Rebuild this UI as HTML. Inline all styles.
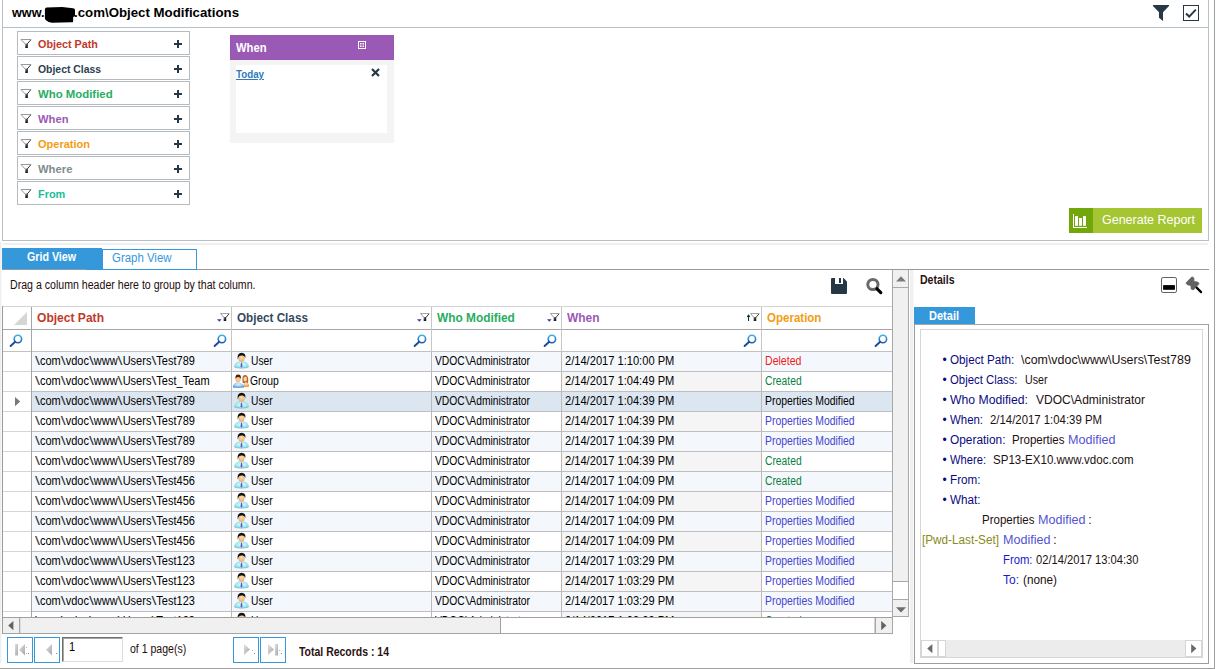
<!DOCTYPE html>
<html><head><meta charset="utf-8"><title>Object Modifications</title>
<style>
html,body{margin:0;padding:0;background:#fff}
body{width:1217px;height:669px;position:relative;overflow:hidden;font-family:"Liberation Sans",sans-serif}
.r{position:absolute;box-sizing:content-box;display:block}
.t{position:absolute;white-space:pre;transform-origin:0 0;display:block}
.bs{display:inline-block;font-style:normal;width:5.4px;transform:scaleX(1.62);transform-origin:0 0;opacity:.78}
</style></head>
<body>
<div class="r" style="left:2px;top:0px;width:1px;height:241px;background:#b9c1c8;"></div>
<div class="r" style="left:1208px;top:0px;width:1px;height:241px;background:#b9c1c8;"></div>
<div class="r" style="left:2px;top:27px;width:1207px;height:1px;background:#b9c1c8;"></div>
<div class="r" style="left:2px;top:240px;width:1207px;height:1px;background:#b9c1c8;"></div>
<div class="r" style="left:3px;top:243px;width:1205px;height:2px;background:#efefef;"></div>
<div class="r" style="left:1214px;top:0px;width:1px;height:669px;background:#a0a0a0;"></div>
<div class="r" style="left:0px;top:668px;width:1215px;height:1px;background:#a0a0a0;"></div>
<svg width="0" height="0" style="position:absolute"><defs><linearGradient id="fs" x1="0" y1="0" x2="1" y2="1"><stop offset="0" stop-color="#9a9a9a"/><stop offset="0.6" stop-color="#222"/><stop offset="1" stop-color="#000"/></linearGradient></defs></svg>
<span class="t" style="left:11.90px;top:4px;font-size:13px;line-height:17px;color:#000;font-weight:bold;transform:scaleX(0.9742);">www.</span>
<svg class="r" style="left:44px;top:5px" width="34" height="20" viewBox="0 0 34 20"><path d="M0.9 4.4 Q1 2.6 2.6 2.4 L18.2 1.9 L29 3.2 Q31 3.4 31 5 L31 11 Q30.8 11.8 29.2 11.9 L29.1 16.4 Q29 17.3 28 17.3 L8 17.8 Q4.5 17.6 1.6 15 Q0.9 14.2 0.9 13 Z" fill="#000"/></svg>
<span class="t" style="left:73.80px;top:4px;font-size:13px;line-height:17px;color:#000;font-weight:bold;transform:scaleX(1.0198);">.com\Object Modifications</span>
<svg class="r" style="left:1153px;top:5px" width="16" height="16" viewBox="0 0 16 16"><path d="M0 0 H16 V1 L10 7.2 V16 L6 12.8 V7.2 L0 1 Z" fill="#263845"/></svg>
<svg class="r" style="left:1183px;top:5px" width="16" height="16" viewBox="0 0 16 16"><rect x="0.5" y="0.5" width="15" height="15" fill="#fff" stroke="#263845" stroke-width="1"/><path d="M3 8.6 L6.2 11.6 L12.8 4.6" fill="none" stroke="#263845" stroke-width="2"/></svg>
<div class="r" style="left:17px;top:31px;width:171px;height:22px;border:1px solid #b4bcc2;background:#fff"></div>
<svg class="r" style="left:20px;top:38px" width="12" height="11" viewBox="0 0 12 11"><path d="M0.8 1.5 H11" stroke="#9a9a9a" stroke-width="1"/><path d="M1.2 1.8 L5.6 6.4" stroke="#8a8a8a" stroke-width="0.9"/><path d="M10.8 1.8 L7.2 6" stroke="#3a3a3a" stroke-width="1"/><rect x="5.2" y="5.6" width="2.6" height="4.4" fill="url(#fs)"/></svg>
<span class="t" style="left:38.00px;top:37px;font-size:11px;line-height:15px;color:#c0392b;font-weight:bold;transform:scaleX(0.9800);">Object Path</span>
<div class="r" style="left:174px;top:43px;width:8px;height:2px;background:#263845;"></div>
<div class="r" style="left:177px;top:40px;width:2px;height:8px;background:#263845;"></div>
<div class="r" style="left:17px;top:56px;width:171px;height:22px;border:1px solid #b4bcc2;background:#fff"></div>
<svg class="r" style="left:20px;top:63px" width="12" height="11" viewBox="0 0 12 11"><path d="M0.8 1.5 H11" stroke="#9a9a9a" stroke-width="1"/><path d="M1.2 1.8 L5.6 6.4" stroke="#8a8a8a" stroke-width="0.9"/><path d="M10.8 1.8 L7.2 6" stroke="#3a3a3a" stroke-width="1"/><rect x="5.2" y="5.6" width="2.6" height="4.4" fill="url(#fs)"/></svg>
<span class="t" style="left:38.00px;top:62px;font-size:11px;line-height:15px;color:#2c3e50;font-weight:bold;transform:scaleX(0.9469);">Object Class</span>
<div class="r" style="left:174px;top:68px;width:8px;height:2px;background:#263845;"></div>
<div class="r" style="left:177px;top:65px;width:2px;height:8px;background:#263845;"></div>
<div class="r" style="left:17px;top:81px;width:171px;height:22px;border:1px solid #b4bcc2;background:#fff"></div>
<svg class="r" style="left:20px;top:88px" width="12" height="11" viewBox="0 0 12 11"><path d="M0.8 1.5 H11" stroke="#9a9a9a" stroke-width="1"/><path d="M1.2 1.8 L5.6 6.4" stroke="#8a8a8a" stroke-width="0.9"/><path d="M10.8 1.8 L7.2 6" stroke="#3a3a3a" stroke-width="1"/><rect x="5.2" y="5.6" width="2.6" height="4.4" fill="url(#fs)"/></svg>
<span class="t" style="left:38.00px;top:87px;font-size:11px;line-height:15px;color:#27ae60;font-weight:bold;transform:scaleX(1.0348);">Who Modified</span>
<div class="r" style="left:174px;top:93px;width:8px;height:2px;background:#263845;"></div>
<div class="r" style="left:177px;top:90px;width:2px;height:8px;background:#263845;"></div>
<div class="r" style="left:17px;top:106px;width:171px;height:22px;border:1px solid #b4bcc2;background:#fff"></div>
<svg class="r" style="left:20px;top:113px" width="12" height="11" viewBox="0 0 12 11"><path d="M0.8 1.5 H11" stroke="#9a9a9a" stroke-width="1"/><path d="M1.2 1.8 L5.6 6.4" stroke="#8a8a8a" stroke-width="0.9"/><path d="M10.8 1.8 L7.2 6" stroke="#3a3a3a" stroke-width="1"/><rect x="5.2" y="5.6" width="2.6" height="4.4" fill="url(#fs)"/></svg>
<span class="t" style="left:38.00px;top:112px;font-size:11px;line-height:15px;color:#9b59b6;font-weight:bold;transform:scaleX(1.0188);">When</span>
<div class="r" style="left:174px;top:118px;width:8px;height:2px;background:#263845;"></div>
<div class="r" style="left:177px;top:115px;width:2px;height:8px;background:#263845;"></div>
<div class="r" style="left:17px;top:131px;width:171px;height:22px;border:1px solid #b4bcc2;background:#fff"></div>
<svg class="r" style="left:20px;top:138px" width="12" height="11" viewBox="0 0 12 11"><path d="M0.8 1.5 H11" stroke="#9a9a9a" stroke-width="1"/><path d="M1.2 1.8 L5.6 6.4" stroke="#8a8a8a" stroke-width="0.9"/><path d="M10.8 1.8 L7.2 6" stroke="#3a3a3a" stroke-width="1"/><rect x="5.2" y="5.6" width="2.6" height="4.4" fill="url(#fs)"/></svg>
<span class="t" style="left:38.00px;top:137px;font-size:11px;line-height:15px;color:#f39c12;font-weight:bold;transform:scaleX(1.0010);">Operation</span>
<div class="r" style="left:174px;top:143px;width:8px;height:2px;background:#263845;"></div>
<div class="r" style="left:177px;top:140px;width:2px;height:8px;background:#263845;"></div>
<div class="r" style="left:17px;top:156px;width:171px;height:22px;border:1px solid #b4bcc2;background:#fff"></div>
<svg class="r" style="left:20px;top:163px" width="12" height="11" viewBox="0 0 12 11"><path d="M0.8 1.5 H11" stroke="#9a9a9a" stroke-width="1"/><path d="M1.2 1.8 L5.6 6.4" stroke="#8a8a8a" stroke-width="0.9"/><path d="M10.8 1.8 L7.2 6" stroke="#3a3a3a" stroke-width="1"/><rect x="5.2" y="5.6" width="2.6" height="4.4" fill="url(#fs)"/></svg>
<span class="t" style="left:38.00px;top:162px;font-size:11px;line-height:15px;color:#7f8c8d;font-weight:bold;transform:scaleX(1.0233);">Where</span>
<div class="r" style="left:174px;top:168px;width:8px;height:2px;background:#263845;"></div>
<div class="r" style="left:177px;top:165px;width:2px;height:8px;background:#263845;"></div>
<div class="r" style="left:17px;top:181px;width:171px;height:22px;border:1px solid #b4bcc2;background:#fff"></div>
<svg class="r" style="left:20px;top:188px" width="12" height="11" viewBox="0 0 12 11"><path d="M0.8 1.5 H11" stroke="#9a9a9a" stroke-width="1"/><path d="M1.2 1.8 L5.6 6.4" stroke="#8a8a8a" stroke-width="0.9"/><path d="M10.8 1.8 L7.2 6" stroke="#3a3a3a" stroke-width="1"/><rect x="5.2" y="5.6" width="2.6" height="4.4" fill="url(#fs)"/></svg>
<span class="t" style="left:38.00px;top:187px;font-size:11px;line-height:15px;color:#1abc9c;font-weight:bold;transform:scaleX(0.9927);">From</span>
<div class="r" style="left:174px;top:193px;width:8px;height:2px;background:#263845;"></div>
<div class="r" style="left:177px;top:190px;width:2px;height:8px;background:#263845;"></div>
<div class="r" style="left:230px;top:35px;width:164px;height:25px;background:#9b59b6;"></div>
<div class="r" style="left:230px;top:60px;width:164px;height:83px;background:#f4f4f4;"></div>
<div class="r" style="left:236px;top:65px;width:151px;height:68px;background:#fff;"></div>
<span class="t" style="left:236.00px;top:40px;font-size:12px;line-height:16px;color:#fff;font-weight:bold;transform:scaleX(0.9339);">When</span>
<svg class="r" style="left:358px;top:41px" width="8" height="8" viewBox="0 0 8 8"><rect x="0.5" y="0.5" width="7" height="7" fill="none" stroke="#fff" stroke-width="1"/><rect x="2" y="2" width="1.5" height="1.5" fill="#fff"/><rect x="4.5" y="2" width="1.5" height="1.5" fill="#fff"/><rect x="2" y="4.5" width="1.5" height="1.5" fill="#fff"/><rect x="4.5" y="4.5" width="1.5" height="1.5" fill="#fff"/></svg>
<span class="t" style="left:236.00px;top:67px;font-size:11px;line-height:15px;color:#2e7ab8;font-weight:bold;transform:scaleX(0.8867);text-decoration:underline;">Today</span>
<svg class="r" style="left:371px;top:68px" width="9" height="9" viewBox="0 0 9 9"><path d="M1 1 L8 8 M8 1 L1 8" stroke="#263845" stroke-width="2.2"/></svg>
<div class="r" style="left:1069px;top:208px;width:24px;height:25px;background:#72a70c;"></div>
<div class="r" style="left:1093px;top:208px;width:109px;height:25px;background:#a5c532;"></div>
<svg class="r" style="left:1072px;top:212px" width="18" height="18" viewBox="0 0 18 18"><rect x="1" y="2" width="1" height="14" fill="#fff"/><rect x="1" y="15" width="14" height="1" fill="#fff"/><rect x="3" y="4.1" width="3" height="9.7" fill="#fff"/><rect x="7" y="6" width="3" height="7.8" fill="#fff"/><rect x="11" y="4.1" width="3" height="9.7" fill="#fff"/></svg>
<span class="t" style="left:1102.00px;top:211px;font-size:13px;line-height:17px;color:#fff;transform:scaleX(0.9604);">Generate Report</span>
<div class="r" style="left:2px;top:248px;width:100px;height:21px;background:#3498db;"></div>
<div class="r" style="left:102px;top:249px;width:93px;height:19px;border:1px solid #3498db;background:#fff"></div>
<div class="r" style="left:2px;top:269px;width:84px;height:1px;background:#8e9aa4;"></div>
<div class="r" style="left:86px;top:269px;width:16px;height:1px;background:#3498db;"></div>
<div class="r" style="left:197px;top:269px;width:1012px;height:1px;background:#9a9a9a;"></div>
<span class="t" style="left:27.40px;top:249px;font-size:12px;line-height:16px;color:#fff;font-weight:bold;transform:scaleX(0.8888);">Grid View</span>
<span class="t" style="left:111.50px;top:250px;font-size:12px;line-height:16px;color:#3498db;transform:scaleX(0.9523);">Graph View</span>
<div class="r" style="left:0px;top:242px;width:1px;height:421px;background:#eeeeee;"></div>
<div class="r" style="left:1px;top:242px;width:1px;height:421px;background:#f9f9f9;"></div>
<span class="t" style="left:9.80px;top:277px;font-size:12px;line-height:16px;color:#240c0c;transform:scaleX(0.8826)">Drag a column header here to group by that column.</span>
<svg class="r" style="left:831px;top:278px" width="16" height="16" viewBox="0 0 16 16"><path d="M1 0 H12.5 L16 3.5 V15 Q16 16 15 16 H1 Q0 16 0 15 V1 Q0 0 1 0 Z" fill="#263845"/><rect x="4" y="0" width="8" height="6" fill="#fff"/><rect x="8" y="0" width="2" height="5" fill="#263845"/></svg>
<svg class="r" style="left:864px;top:276px" width="20" height="20" viewBox="0 0 20 20"><circle cx="8.9" cy="8.5" r="5.1" fill="none" stroke="#6a6a6a" stroke-width="3"/><path d="M13 12.8 L16.8 16.6" stroke="#000" stroke-width="3.2" stroke-linecap="round"/></svg>
<div class="r" style="left:3px;top:307px;width:889px;height:45px;background:#fff;"></div>
<div class="r" style="left:2px;top:306px;width:891px;height:1px;background:#d4d4d4;"></div>
<div class="r" style="left:2px;top:306px;width:1px;height:328px;background:#9a9a9a;"></div>
<div class="r" style="left:3px;top:329px;width:889px;height:1px;background:#a6a6a6;"></div>
<div class="r" style="left:3px;top:351px;width:889px;height:1px;background:#c2c2c2;"></div>
<svg class="r" style="left:13px;top:311px" width="15" height="15" viewBox="0 0 15 15"><path d="M14 1 V14 H1 Z" fill="#d6d6d6"/></svg>
<span class="t" style="left:36.70px;top:310px;font-size:12px;line-height:16px;color:#c0392b;font-weight:bold;transform:scaleX(1.0048);">Object Path</span>
<span class="t" style="left:236.50px;top:310px;font-size:12px;line-height:16px;color:#34495e;font-weight:bold;transform:scaleX(0.9753);">Object Class</span>
<span class="t" style="left:436.80px;top:310px;font-size:12px;line-height:16px;color:#27ae60;font-weight:bold;transform:scaleX(0.9893);">Who Modified</span>
<span class="t" style="left:567.30px;top:310px;font-size:12px;line-height:16px;color:#9b59b6;font-weight:bold;transform:scaleX(0.9951);">When</span>
<span class="t" style="left:766.80px;top:310px;font-size:12px;line-height:16px;color:#f39c12;font-weight:bold;transform:scaleX(0.9599);">Operation</span>
<svg width="0" height="0" style="position:absolute"><defs><linearGradient id="mg" x1="0" y1="0" x2="0" y2="1"><stop offset="0" stop-color="#38b0ea"/><stop offset="1" stop-color="#1f5cb0"/></linearGradient></defs></svg>
<svg class="r" style="left:9px;top:334px" width="14" height="14" viewBox="0 0 14 14"><circle cx="8.9" cy="5" r="3.7" fill="#fff" stroke="url(#mg)" stroke-width="1.6"/><path d="M6.2 7.8 L1.6 12" stroke="#1d4c9c" stroke-width="2" stroke-linecap="round"/></svg>
<svg class="r" style="left:213px;top:334px" width="14" height="14" viewBox="0 0 14 14"><circle cx="8.9" cy="5" r="3.7" fill="#fff" stroke="url(#mg)" stroke-width="1.6"/><path d="M6.2 7.8 L1.6 12" stroke="#1d4c9c" stroke-width="2" stroke-linecap="round"/></svg>
<svg class="r" style="left:413px;top:334px" width="14" height="14" viewBox="0 0 14 14"><circle cx="8.9" cy="5" r="3.7" fill="#fff" stroke="url(#mg)" stroke-width="1.6"/><path d="M6.2 7.8 L1.6 12" stroke="#1d4c9c" stroke-width="2" stroke-linecap="round"/></svg>
<svg class="r" style="left:543px;top:334px" width="14" height="14" viewBox="0 0 14 14"><circle cx="8.9" cy="5" r="3.7" fill="#fff" stroke="url(#mg)" stroke-width="1.6"/><path d="M6.2 7.8 L1.6 12" stroke="#1d4c9c" stroke-width="2" stroke-linecap="round"/></svg>
<svg class="r" style="left:743px;top:334px" width="14" height="14" viewBox="0 0 14 14"><circle cx="8.9" cy="5" r="3.7" fill="#fff" stroke="url(#mg)" stroke-width="1.6"/><path d="M6.2 7.8 L1.6 12" stroke="#1d4c9c" stroke-width="2" stroke-linecap="round"/></svg>
<svg class="r" style="left:874px;top:334px" width="14" height="14" viewBox="0 0 14 14"><circle cx="8.9" cy="5" r="3.7" fill="#fff" stroke="url(#mg)" stroke-width="1.6"/><path d="M6.2 7.8 L1.6 12" stroke="#1d4c9c" stroke-width="2" stroke-linecap="round"/></svg>
<svg class="r" style="left:217px;top:313px" width="13" height="10" viewBox="0 0 13 10"><path d="M0 6.2 H4.6 L2.3 8.8 Z" fill="#3a3aa8"/><path d="M3.4 0.5 H12.2" stroke="#a4a4a4" stroke-width="1"/><path d="M3.7 0.8 L7 4.6" stroke="#8a8a8a" stroke-width="0.9"/><path d="M12 0.8 L8.8 4.6" stroke="#3a3a3a" stroke-width="1"/><rect x="6.6" y="4" width="2.6" height="4" fill="url(#fs)"/></svg>
<svg class="r" style="left:417px;top:313px" width="13" height="10" viewBox="0 0 13 10"><path d="M0 6.2 H4.6 L2.3 8.8 Z" fill="#3a3aa8"/><path d="M3.4 0.5 H12.2" stroke="#a4a4a4" stroke-width="1"/><path d="M3.7 0.8 L7 4.6" stroke="#8a8a8a" stroke-width="0.9"/><path d="M12 0.8 L8.8 4.6" stroke="#3a3a3a" stroke-width="1"/><rect x="6.6" y="4" width="2.6" height="4" fill="url(#fs)"/></svg>
<svg class="r" style="left:547px;top:313px" width="13" height="10" viewBox="0 0 13 10"><path d="M0 6.2 H4.6 L2.3 8.8 Z" fill="#3a3aa8"/><path d="M3.4 0.5 H12.2" stroke="#a4a4a4" stroke-width="1"/><path d="M3.7 0.8 L7 4.6" stroke="#8a8a8a" stroke-width="0.9"/><path d="M12 0.8 L8.8 4.6" stroke="#3a3a3a" stroke-width="1"/><rect x="6.6" y="4" width="2.6" height="4" fill="url(#fs)"/></svg>
<svg class="r" style="left:747px;top:313px" width="13" height="10" viewBox="0 0 13 10"><path d="M1.5 2.2 V8 M0.2 3.8 L1.5 2.2 L2.8 3.8" fill="none" stroke="#0a3838" stroke-width="1.1"/><path d="M3.4 0.5 H12.2" stroke="#a4a4a4" stroke-width="1"/><path d="M3.7 0.8 L7 4.6" stroke="#8a8a8a" stroke-width="0.9"/><path d="M12 0.8 L8.8 4.6" stroke="#3a3a3a" stroke-width="1"/><rect x="6.6" y="4" width="2.6" height="4" fill="url(#fs)"/></svg>
<svg width="0" height="0" style="position:absolute"><defs><radialGradient id="ub" cx="0.5" cy="0.45" r="0.62"><stop offset="0" stop-color="#e6fbfe"/><stop offset="0.55" stop-color="#a8ecf6"/><stop offset="1" stop-color="#5fcfe4"/></radialGradient><radialGradient id="sk" cx="0.5" cy="0.4" r="0.7"><stop offset="0" stop-color="#fcdcae"/><stop offset="1" stop-color="#e2a468"/></radialGradient><radialGradient id="mb" cx="0.5" cy="0.35" r="0.7"><stop offset="0" stop-color="#e4f2fc"/><stop offset="0.5" stop-color="#9cccf2"/><stop offset="1" stop-color="#3684d6"/></radialGradient><radialGradient id="wb" cx="0.45" cy="0.4" r="0.7"><stop offset="0" stop-color="#fff0d4"/><stop offset="0.5" stop-color="#f8b060"/><stop offset="1" stop-color="#e87818"/></radialGradient></defs></svg>
<div class="r" style="left:3px;top:352px;width:890px;height:265px;overflow:hidden">
<div class="r" style="left:0;top:0px;width:28px;height:19px;background:#fff"></div>
<div class="r" style="left:29px;top:0px;width:860px;height:19px;background:#f4f8fc"></div>
<div class="r" style="left:0;top:19px;width:28px;height:1px;background:#d6d6d6"></div>
<div class="r" style="left:28px;top:19px;width:861px;height:1px;background:#bebebe"></div>
<svg class="r" style="left:230px;top:0px" width="17" height="17" viewBox="0 0 17 17"><path d="M1.2 14.6 Q1.5 10.6 6 9.6 L11 9.6 Q15.5 10.6 15.8 14.6 Q15 16 8.5 16.2 Q2 16 1.2 14.6 Z" fill="url(#ub)"/><path d="M1.4 14.9 Q3 16 8.5 16.1 Q14 16 15.6 14.9" fill="none" stroke="#9aaeb2" stroke-width="0.7"/><path d="M6.8 9.6 L8.5 12.2 L10.2 9.6 Z" fill="#fff"/><path d="M8 10.6 H9 L9.5 14.4 L8.5 15.4 L7.5 14.4 Z" fill="#5a5ac4"/><ellipse cx="8.5" cy="6.3" rx="3.1" ry="3.7" fill="url(#sk)"/><path d="M4.7 7 Q3.9 1 8.6 0.8 Q13.2 1 12.3 6.2 Q11.8 3.7 9.6 3.5 Q7.2 3.2 6.1 4.3 Q5.1 5.2 5 7.2 Z" fill="#141414"/></svg>
<span class="t" style="left:32.30px;top:1px;font-size:12px;line-height:16px;color:#000;transform:scaleX(0.9170)"><i class="bs">\</i>com<i class="bs">\</i>vdoc<i class="bs">\</i>www<i class="bs">\</i>Users<i class="bs">\</i>Test789</span>
<span class="t" style="left:248.30px;top:1px;font-size:12px;line-height:16px;color:#000;transform:scaleX(0.8525)">User</span>
<span class="t" style="left:432.40px;top:1px;font-size:12px;line-height:16px;color:#000;transform:scaleX(0.8577)">VDOC<i class="bs">\</i>Administrator</span>
<span class="t" style="left:562.10px;top:1px;font-size:12px;line-height:16px;color:#000;transform:scaleX(0.9256)">2/14/2017 1:10:00 PM</span>
<span class="t" style="left:761.80px;top:1px;font-size:12px;line-height:16px;color:#f01a1a;transform:scaleX(0.8800)">Deleted</span>
<div class="r" style="left:0;top:20px;width:28px;height:19px;background:#fff"></div>
<div class="r" style="left:29px;top:20px;width:860px;height:19px;background:#ffffff"></div>
<div class="r" style="left:559px;top:20px;width:199px;height:19px;background:#f5f5f5"></div>
<div class="r" style="left:0;top:39px;width:28px;height:1px;background:#d6d6d6"></div>
<div class="r" style="left:28px;top:39px;width:861px;height:1px;background:#bebebe"></div>
<svg class="r" style="left:229px;top:22px" width="18" height="15" viewBox="0 0 18 15"><path d="M10.4 6 Q10 1.2 13.2 1.1 Q16.6 1.2 16.2 7.4 L15.8 9 L10.8 9 Z" fill="#b0662a"/><ellipse cx="13.2" cy="5" rx="1.8" ry="2.5" fill="#f8d2a4"/><path d="M11.4 12.8 Q11.4 8.3 14 8 Q17 8.4 17 12.6 Q14 13.1 11.4 12.8 Z" fill="url(#wb)"/><path d="M0.8 13.6 Q0.8 8.8 5.6 8.2 Q12 8.8 12.1 13.6 Q6 14.4 0.8 13.6 Z" fill="url(#mb)"/><ellipse cx="6.1" cy="5.1" rx="2.6" ry="3.1" fill="#f4b26c"/><ellipse cx="6.1" cy="5.6" rx="1.8" ry="2.2" fill="#f9c88e"/><path d="M3.4 4.8 Q3 0.5 6.2 0.5 Q9.4 0.6 8.9 4.8 Q8 2.7 6.2 2.9 Q4.3 2.7 3.4 4.8 Z" fill="#4a2008"/></svg>
<span class="t" style="left:32.30px;top:21px;font-size:12px;line-height:16px;color:#000;transform:scaleX(0.9170)"><i class="bs">\</i>com<i class="bs">\</i>vdoc<i class="bs">\</i>www<i class="bs">\</i>Users<i class="bs">\</i>Test_Team</span>
<span class="t" style="left:247.40px;top:21px;font-size:12px;line-height:16px;color:#000;transform:scaleX(0.8635)">Group</span>
<span class="t" style="left:432.40px;top:21px;font-size:12px;line-height:16px;color:#000;transform:scaleX(0.8577)">VDOC<i class="bs">\</i>Administrator</span>
<span class="t" style="left:562.10px;top:21px;font-size:12px;line-height:16px;color:#000;transform:scaleX(0.9256)">2/14/2017 1:04:49 PM</span>
<span class="t" style="left:761.80px;top:21px;font-size:12px;line-height:16px;color:#0a8040;transform:scaleX(0.8573)">Created</span>
<div class="r" style="left:0;top:40px;width:28px;height:19px;background:#fff"></div>
<div class="r" style="left:29px;top:40px;width:860px;height:19px;background:#dce6f0"></div>
<div class="r" style="left:0;top:59px;width:28px;height:1px;background:#d6d6d6"></div>
<div class="r" style="left:28px;top:59px;width:861px;height:1px;background:#bebebe"></div>
<svg class="r" style="left:12px;top:45px" width="6" height="10" viewBox="0 0 6 10"><path d="M0 0 L5.2 4.6 L0 9.2 Z" fill="#787878"/></svg>
<svg class="r" style="left:230px;top:40px" width="17" height="17" viewBox="0 0 17 17"><path d="M1.2 14.6 Q1.5 10.6 6 9.6 L11 9.6 Q15.5 10.6 15.8 14.6 Q15 16 8.5 16.2 Q2 16 1.2 14.6 Z" fill="url(#ub)"/><path d="M1.4 14.9 Q3 16 8.5 16.1 Q14 16 15.6 14.9" fill="none" stroke="#9aaeb2" stroke-width="0.7"/><path d="M6.8 9.6 L8.5 12.2 L10.2 9.6 Z" fill="#fff"/><path d="M8 10.6 H9 L9.5 14.4 L8.5 15.4 L7.5 14.4 Z" fill="#5a5ac4"/><ellipse cx="8.5" cy="6.3" rx="3.1" ry="3.7" fill="url(#sk)"/><path d="M4.7 7 Q3.9 1 8.6 0.8 Q13.2 1 12.3 6.2 Q11.8 3.7 9.6 3.5 Q7.2 3.2 6.1 4.3 Q5.1 5.2 5 7.2 Z" fill="#141414"/></svg>
<span class="t" style="left:32.30px;top:41px;font-size:12px;line-height:16px;color:#000;transform:scaleX(0.9170)"><i class="bs">\</i>com<i class="bs">\</i>vdoc<i class="bs">\</i>www<i class="bs">\</i>Users<i class="bs">\</i>Test789</span>
<span class="t" style="left:248.30px;top:41px;font-size:12px;line-height:16px;color:#000;transform:scaleX(0.8525)">User</span>
<span class="t" style="left:432.40px;top:41px;font-size:12px;line-height:16px;color:#000;transform:scaleX(0.8577)">VDOC<i class="bs">\</i>Administrator</span>
<span class="t" style="left:562.10px;top:41px;font-size:12px;line-height:16px;color:#000;transform:scaleX(0.9256)">2/14/2017 1:04:39 PM</span>
<span class="t" style="left:761.80px;top:41px;font-size:12px;line-height:16px;color:#000;transform:scaleX(0.8667)">Properties Modified</span>
<div class="r" style="left:0;top:60px;width:28px;height:19px;background:#fff"></div>
<div class="r" style="left:29px;top:60px;width:860px;height:19px;background:#ffffff"></div>
<div class="r" style="left:559px;top:60px;width:199px;height:19px;background:#f5f5f5"></div>
<div class="r" style="left:0;top:79px;width:28px;height:1px;background:#d6d6d6"></div>
<div class="r" style="left:28px;top:79px;width:861px;height:1px;background:#bebebe"></div>
<svg class="r" style="left:230px;top:60px" width="17" height="17" viewBox="0 0 17 17"><path d="M1.2 14.6 Q1.5 10.6 6 9.6 L11 9.6 Q15.5 10.6 15.8 14.6 Q15 16 8.5 16.2 Q2 16 1.2 14.6 Z" fill="url(#ub)"/><path d="M1.4 14.9 Q3 16 8.5 16.1 Q14 16 15.6 14.9" fill="none" stroke="#9aaeb2" stroke-width="0.7"/><path d="M6.8 9.6 L8.5 12.2 L10.2 9.6 Z" fill="#fff"/><path d="M8 10.6 H9 L9.5 14.4 L8.5 15.4 L7.5 14.4 Z" fill="#5a5ac4"/><ellipse cx="8.5" cy="6.3" rx="3.1" ry="3.7" fill="url(#sk)"/><path d="M4.7 7 Q3.9 1 8.6 0.8 Q13.2 1 12.3 6.2 Q11.8 3.7 9.6 3.5 Q7.2 3.2 6.1 4.3 Q5.1 5.2 5 7.2 Z" fill="#141414"/></svg>
<span class="t" style="left:32.30px;top:61px;font-size:12px;line-height:16px;color:#000;transform:scaleX(0.9170)"><i class="bs">\</i>com<i class="bs">\</i>vdoc<i class="bs">\</i>www<i class="bs">\</i>Users<i class="bs">\</i>Test789</span>
<span class="t" style="left:248.30px;top:61px;font-size:12px;line-height:16px;color:#000;transform:scaleX(0.8525)">User</span>
<span class="t" style="left:432.40px;top:61px;font-size:12px;line-height:16px;color:#000;transform:scaleX(0.8577)">VDOC<i class="bs">\</i>Administrator</span>
<span class="t" style="left:562.10px;top:61px;font-size:12px;line-height:16px;color:#000;transform:scaleX(0.9256)">2/14/2017 1:04:39 PM</span>
<span class="t" style="left:761.80px;top:61px;font-size:12px;line-height:16px;color:#4444d0;transform:scaleX(0.8667)">Properties Modified</span>
<div class="r" style="left:0;top:80px;width:28px;height:19px;background:#fff"></div>
<div class="r" style="left:29px;top:80px;width:860px;height:19px;background:#f4f8fc"></div>
<div class="r" style="left:0;top:99px;width:28px;height:1px;background:#d6d6d6"></div>
<div class="r" style="left:28px;top:99px;width:861px;height:1px;background:#bebebe"></div>
<svg class="r" style="left:230px;top:80px" width="17" height="17" viewBox="0 0 17 17"><path d="M1.2 14.6 Q1.5 10.6 6 9.6 L11 9.6 Q15.5 10.6 15.8 14.6 Q15 16 8.5 16.2 Q2 16 1.2 14.6 Z" fill="url(#ub)"/><path d="M1.4 14.9 Q3 16 8.5 16.1 Q14 16 15.6 14.9" fill="none" stroke="#9aaeb2" stroke-width="0.7"/><path d="M6.8 9.6 L8.5 12.2 L10.2 9.6 Z" fill="#fff"/><path d="M8 10.6 H9 L9.5 14.4 L8.5 15.4 L7.5 14.4 Z" fill="#5a5ac4"/><ellipse cx="8.5" cy="6.3" rx="3.1" ry="3.7" fill="url(#sk)"/><path d="M4.7 7 Q3.9 1 8.6 0.8 Q13.2 1 12.3 6.2 Q11.8 3.7 9.6 3.5 Q7.2 3.2 6.1 4.3 Q5.1 5.2 5 7.2 Z" fill="#141414"/></svg>
<span class="t" style="left:32.30px;top:81px;font-size:12px;line-height:16px;color:#000;transform:scaleX(0.9170)"><i class="bs">\</i>com<i class="bs">\</i>vdoc<i class="bs">\</i>www<i class="bs">\</i>Users<i class="bs">\</i>Test789</span>
<span class="t" style="left:248.30px;top:81px;font-size:12px;line-height:16px;color:#000;transform:scaleX(0.8525)">User</span>
<span class="t" style="left:432.40px;top:81px;font-size:12px;line-height:16px;color:#000;transform:scaleX(0.8577)">VDOC<i class="bs">\</i>Administrator</span>
<span class="t" style="left:562.10px;top:81px;font-size:12px;line-height:16px;color:#000;transform:scaleX(0.9256)">2/14/2017 1:04:39 PM</span>
<span class="t" style="left:761.80px;top:81px;font-size:12px;line-height:16px;color:#4444d0;transform:scaleX(0.8667)">Properties Modified</span>
<div class="r" style="left:0;top:100px;width:28px;height:19px;background:#fff"></div>
<div class="r" style="left:29px;top:100px;width:860px;height:19px;background:#ffffff"></div>
<div class="r" style="left:559px;top:100px;width:199px;height:19px;background:#f5f5f5"></div>
<div class="r" style="left:0;top:119px;width:28px;height:1px;background:#d6d6d6"></div>
<div class="r" style="left:28px;top:119px;width:861px;height:1px;background:#bebebe"></div>
<svg class="r" style="left:230px;top:100px" width="17" height="17" viewBox="0 0 17 17"><path d="M1.2 14.6 Q1.5 10.6 6 9.6 L11 9.6 Q15.5 10.6 15.8 14.6 Q15 16 8.5 16.2 Q2 16 1.2 14.6 Z" fill="url(#ub)"/><path d="M1.4 14.9 Q3 16 8.5 16.1 Q14 16 15.6 14.9" fill="none" stroke="#9aaeb2" stroke-width="0.7"/><path d="M6.8 9.6 L8.5 12.2 L10.2 9.6 Z" fill="#fff"/><path d="M8 10.6 H9 L9.5 14.4 L8.5 15.4 L7.5 14.4 Z" fill="#5a5ac4"/><ellipse cx="8.5" cy="6.3" rx="3.1" ry="3.7" fill="url(#sk)"/><path d="M4.7 7 Q3.9 1 8.6 0.8 Q13.2 1 12.3 6.2 Q11.8 3.7 9.6 3.5 Q7.2 3.2 6.1 4.3 Q5.1 5.2 5 7.2 Z" fill="#141414"/></svg>
<span class="t" style="left:32.30px;top:101px;font-size:12px;line-height:16px;color:#000;transform:scaleX(0.9170)"><i class="bs">\</i>com<i class="bs">\</i>vdoc<i class="bs">\</i>www<i class="bs">\</i>Users<i class="bs">\</i>Test789</span>
<span class="t" style="left:248.30px;top:101px;font-size:12px;line-height:16px;color:#000;transform:scaleX(0.8525)">User</span>
<span class="t" style="left:432.40px;top:101px;font-size:12px;line-height:16px;color:#000;transform:scaleX(0.8577)">VDOC<i class="bs">\</i>Administrator</span>
<span class="t" style="left:562.10px;top:101px;font-size:12px;line-height:16px;color:#000;transform:scaleX(0.9256)">2/14/2017 1:04:39 PM</span>
<span class="t" style="left:761.80px;top:101px;font-size:12px;line-height:16px;color:#0a8040;transform:scaleX(0.8573)">Created</span>
<div class="r" style="left:0;top:120px;width:28px;height:19px;background:#fff"></div>
<div class="r" style="left:29px;top:120px;width:860px;height:19px;background:#f4f8fc"></div>
<div class="r" style="left:0;top:139px;width:28px;height:1px;background:#d6d6d6"></div>
<div class="r" style="left:28px;top:139px;width:861px;height:1px;background:#bebebe"></div>
<svg class="r" style="left:230px;top:120px" width="17" height="17" viewBox="0 0 17 17"><path d="M1.2 14.6 Q1.5 10.6 6 9.6 L11 9.6 Q15.5 10.6 15.8 14.6 Q15 16 8.5 16.2 Q2 16 1.2 14.6 Z" fill="url(#ub)"/><path d="M1.4 14.9 Q3 16 8.5 16.1 Q14 16 15.6 14.9" fill="none" stroke="#9aaeb2" stroke-width="0.7"/><path d="M6.8 9.6 L8.5 12.2 L10.2 9.6 Z" fill="#fff"/><path d="M8 10.6 H9 L9.5 14.4 L8.5 15.4 L7.5 14.4 Z" fill="#5a5ac4"/><ellipse cx="8.5" cy="6.3" rx="3.1" ry="3.7" fill="url(#sk)"/><path d="M4.7 7 Q3.9 1 8.6 0.8 Q13.2 1 12.3 6.2 Q11.8 3.7 9.6 3.5 Q7.2 3.2 6.1 4.3 Q5.1 5.2 5 7.2 Z" fill="#141414"/></svg>
<span class="t" style="left:32.30px;top:121px;font-size:12px;line-height:16px;color:#000;transform:scaleX(0.9170)"><i class="bs">\</i>com<i class="bs">\</i>vdoc<i class="bs">\</i>www<i class="bs">\</i>Users<i class="bs">\</i>Test456</span>
<span class="t" style="left:248.30px;top:121px;font-size:12px;line-height:16px;color:#000;transform:scaleX(0.8525)">User</span>
<span class="t" style="left:432.40px;top:121px;font-size:12px;line-height:16px;color:#000;transform:scaleX(0.8577)">VDOC<i class="bs">\</i>Administrator</span>
<span class="t" style="left:562.10px;top:121px;font-size:12px;line-height:16px;color:#000;transform:scaleX(0.9256)">2/14/2017 1:04:09 PM</span>
<span class="t" style="left:761.80px;top:121px;font-size:12px;line-height:16px;color:#0a8040;transform:scaleX(0.8573)">Created</span>
<div class="r" style="left:0;top:140px;width:28px;height:19px;background:#fff"></div>
<div class="r" style="left:29px;top:140px;width:860px;height:19px;background:#ffffff"></div>
<div class="r" style="left:559px;top:140px;width:199px;height:19px;background:#f5f5f5"></div>
<div class="r" style="left:0;top:159px;width:28px;height:1px;background:#d6d6d6"></div>
<div class="r" style="left:28px;top:159px;width:861px;height:1px;background:#bebebe"></div>
<svg class="r" style="left:230px;top:140px" width="17" height="17" viewBox="0 0 17 17"><path d="M1.2 14.6 Q1.5 10.6 6 9.6 L11 9.6 Q15.5 10.6 15.8 14.6 Q15 16 8.5 16.2 Q2 16 1.2 14.6 Z" fill="url(#ub)"/><path d="M1.4 14.9 Q3 16 8.5 16.1 Q14 16 15.6 14.9" fill="none" stroke="#9aaeb2" stroke-width="0.7"/><path d="M6.8 9.6 L8.5 12.2 L10.2 9.6 Z" fill="#fff"/><path d="M8 10.6 H9 L9.5 14.4 L8.5 15.4 L7.5 14.4 Z" fill="#5a5ac4"/><ellipse cx="8.5" cy="6.3" rx="3.1" ry="3.7" fill="url(#sk)"/><path d="M4.7 7 Q3.9 1 8.6 0.8 Q13.2 1 12.3 6.2 Q11.8 3.7 9.6 3.5 Q7.2 3.2 6.1 4.3 Q5.1 5.2 5 7.2 Z" fill="#141414"/></svg>
<span class="t" style="left:32.30px;top:141px;font-size:12px;line-height:16px;color:#000;transform:scaleX(0.9170)"><i class="bs">\</i>com<i class="bs">\</i>vdoc<i class="bs">\</i>www<i class="bs">\</i>Users<i class="bs">\</i>Test456</span>
<span class="t" style="left:248.30px;top:141px;font-size:12px;line-height:16px;color:#000;transform:scaleX(0.8525)">User</span>
<span class="t" style="left:432.40px;top:141px;font-size:12px;line-height:16px;color:#000;transform:scaleX(0.8577)">VDOC<i class="bs">\</i>Administrator</span>
<span class="t" style="left:562.10px;top:141px;font-size:12px;line-height:16px;color:#000;transform:scaleX(0.9256)">2/14/2017 1:04:09 PM</span>
<span class="t" style="left:761.80px;top:141px;font-size:12px;line-height:16px;color:#4444d0;transform:scaleX(0.8667)">Properties Modified</span>
<div class="r" style="left:0;top:160px;width:28px;height:19px;background:#fff"></div>
<div class="r" style="left:29px;top:160px;width:860px;height:19px;background:#f4f8fc"></div>
<div class="r" style="left:0;top:179px;width:28px;height:1px;background:#d6d6d6"></div>
<div class="r" style="left:28px;top:179px;width:861px;height:1px;background:#bebebe"></div>
<svg class="r" style="left:230px;top:160px" width="17" height="17" viewBox="0 0 17 17"><path d="M1.2 14.6 Q1.5 10.6 6 9.6 L11 9.6 Q15.5 10.6 15.8 14.6 Q15 16 8.5 16.2 Q2 16 1.2 14.6 Z" fill="url(#ub)"/><path d="M1.4 14.9 Q3 16 8.5 16.1 Q14 16 15.6 14.9" fill="none" stroke="#9aaeb2" stroke-width="0.7"/><path d="M6.8 9.6 L8.5 12.2 L10.2 9.6 Z" fill="#fff"/><path d="M8 10.6 H9 L9.5 14.4 L8.5 15.4 L7.5 14.4 Z" fill="#5a5ac4"/><ellipse cx="8.5" cy="6.3" rx="3.1" ry="3.7" fill="url(#sk)"/><path d="M4.7 7 Q3.9 1 8.6 0.8 Q13.2 1 12.3 6.2 Q11.8 3.7 9.6 3.5 Q7.2 3.2 6.1 4.3 Q5.1 5.2 5 7.2 Z" fill="#141414"/></svg>
<span class="t" style="left:32.30px;top:161px;font-size:12px;line-height:16px;color:#000;transform:scaleX(0.9170)"><i class="bs">\</i>com<i class="bs">\</i>vdoc<i class="bs">\</i>www<i class="bs">\</i>Users<i class="bs">\</i>Test456</span>
<span class="t" style="left:248.30px;top:161px;font-size:12px;line-height:16px;color:#000;transform:scaleX(0.8525)">User</span>
<span class="t" style="left:432.40px;top:161px;font-size:12px;line-height:16px;color:#000;transform:scaleX(0.8577)">VDOC<i class="bs">\</i>Administrator</span>
<span class="t" style="left:562.10px;top:161px;font-size:12px;line-height:16px;color:#000;transform:scaleX(0.9256)">2/14/2017 1:04:09 PM</span>
<span class="t" style="left:761.80px;top:161px;font-size:12px;line-height:16px;color:#4444d0;transform:scaleX(0.8667)">Properties Modified</span>
<div class="r" style="left:0;top:180px;width:28px;height:19px;background:#fff"></div>
<div class="r" style="left:29px;top:180px;width:860px;height:19px;background:#ffffff"></div>
<div class="r" style="left:559px;top:180px;width:199px;height:19px;background:#f5f5f5"></div>
<div class="r" style="left:0;top:199px;width:28px;height:1px;background:#d6d6d6"></div>
<div class="r" style="left:28px;top:199px;width:861px;height:1px;background:#bebebe"></div>
<svg class="r" style="left:230px;top:180px" width="17" height="17" viewBox="0 0 17 17"><path d="M1.2 14.6 Q1.5 10.6 6 9.6 L11 9.6 Q15.5 10.6 15.8 14.6 Q15 16 8.5 16.2 Q2 16 1.2 14.6 Z" fill="url(#ub)"/><path d="M1.4 14.9 Q3 16 8.5 16.1 Q14 16 15.6 14.9" fill="none" stroke="#9aaeb2" stroke-width="0.7"/><path d="M6.8 9.6 L8.5 12.2 L10.2 9.6 Z" fill="#fff"/><path d="M8 10.6 H9 L9.5 14.4 L8.5 15.4 L7.5 14.4 Z" fill="#5a5ac4"/><ellipse cx="8.5" cy="6.3" rx="3.1" ry="3.7" fill="url(#sk)"/><path d="M4.7 7 Q3.9 1 8.6 0.8 Q13.2 1 12.3 6.2 Q11.8 3.7 9.6 3.5 Q7.2 3.2 6.1 4.3 Q5.1 5.2 5 7.2 Z" fill="#141414"/></svg>
<span class="t" style="left:32.30px;top:181px;font-size:12px;line-height:16px;color:#000;transform:scaleX(0.9170)"><i class="bs">\</i>com<i class="bs">\</i>vdoc<i class="bs">\</i>www<i class="bs">\</i>Users<i class="bs">\</i>Test456</span>
<span class="t" style="left:248.30px;top:181px;font-size:12px;line-height:16px;color:#000;transform:scaleX(0.8525)">User</span>
<span class="t" style="left:432.40px;top:181px;font-size:12px;line-height:16px;color:#000;transform:scaleX(0.8577)">VDOC<i class="bs">\</i>Administrator</span>
<span class="t" style="left:562.10px;top:181px;font-size:12px;line-height:16px;color:#000;transform:scaleX(0.9256)">2/14/2017 1:04:09 PM</span>
<span class="t" style="left:761.80px;top:181px;font-size:12px;line-height:16px;color:#4444d0;transform:scaleX(0.8667)">Properties Modified</span>
<div class="r" style="left:0;top:200px;width:28px;height:19px;background:#fff"></div>
<div class="r" style="left:29px;top:200px;width:860px;height:19px;background:#f4f8fc"></div>
<div class="r" style="left:0;top:219px;width:28px;height:1px;background:#d6d6d6"></div>
<div class="r" style="left:28px;top:219px;width:861px;height:1px;background:#bebebe"></div>
<svg class="r" style="left:230px;top:200px" width="17" height="17" viewBox="0 0 17 17"><path d="M1.2 14.6 Q1.5 10.6 6 9.6 L11 9.6 Q15.5 10.6 15.8 14.6 Q15 16 8.5 16.2 Q2 16 1.2 14.6 Z" fill="url(#ub)"/><path d="M1.4 14.9 Q3 16 8.5 16.1 Q14 16 15.6 14.9" fill="none" stroke="#9aaeb2" stroke-width="0.7"/><path d="M6.8 9.6 L8.5 12.2 L10.2 9.6 Z" fill="#fff"/><path d="M8 10.6 H9 L9.5 14.4 L8.5 15.4 L7.5 14.4 Z" fill="#5a5ac4"/><ellipse cx="8.5" cy="6.3" rx="3.1" ry="3.7" fill="url(#sk)"/><path d="M4.7 7 Q3.9 1 8.6 0.8 Q13.2 1 12.3 6.2 Q11.8 3.7 9.6 3.5 Q7.2 3.2 6.1 4.3 Q5.1 5.2 5 7.2 Z" fill="#141414"/></svg>
<span class="t" style="left:32.30px;top:201px;font-size:12px;line-height:16px;color:#000;transform:scaleX(0.9170)"><i class="bs">\</i>com<i class="bs">\</i>vdoc<i class="bs">\</i>www<i class="bs">\</i>Users<i class="bs">\</i>Test123</span>
<span class="t" style="left:248.30px;top:201px;font-size:12px;line-height:16px;color:#000;transform:scaleX(0.8525)">User</span>
<span class="t" style="left:432.40px;top:201px;font-size:12px;line-height:16px;color:#000;transform:scaleX(0.8577)">VDOC<i class="bs">\</i>Administrator</span>
<span class="t" style="left:562.10px;top:201px;font-size:12px;line-height:16px;color:#000;transform:scaleX(0.9256)">2/14/2017 1:03:29 PM</span>
<span class="t" style="left:761.80px;top:201px;font-size:12px;line-height:16px;color:#4444d0;transform:scaleX(0.8667)">Properties Modified</span>
<div class="r" style="left:0;top:220px;width:28px;height:19px;background:#fff"></div>
<div class="r" style="left:29px;top:220px;width:860px;height:19px;background:#ffffff"></div>
<div class="r" style="left:559px;top:220px;width:199px;height:19px;background:#f5f5f5"></div>
<div class="r" style="left:0;top:239px;width:28px;height:1px;background:#d6d6d6"></div>
<div class="r" style="left:28px;top:239px;width:861px;height:1px;background:#bebebe"></div>
<svg class="r" style="left:230px;top:220px" width="17" height="17" viewBox="0 0 17 17"><path d="M1.2 14.6 Q1.5 10.6 6 9.6 L11 9.6 Q15.5 10.6 15.8 14.6 Q15 16 8.5 16.2 Q2 16 1.2 14.6 Z" fill="url(#ub)"/><path d="M1.4 14.9 Q3 16 8.5 16.1 Q14 16 15.6 14.9" fill="none" stroke="#9aaeb2" stroke-width="0.7"/><path d="M6.8 9.6 L8.5 12.2 L10.2 9.6 Z" fill="#fff"/><path d="M8 10.6 H9 L9.5 14.4 L8.5 15.4 L7.5 14.4 Z" fill="#5a5ac4"/><ellipse cx="8.5" cy="6.3" rx="3.1" ry="3.7" fill="url(#sk)"/><path d="M4.7 7 Q3.9 1 8.6 0.8 Q13.2 1 12.3 6.2 Q11.8 3.7 9.6 3.5 Q7.2 3.2 6.1 4.3 Q5.1 5.2 5 7.2 Z" fill="#141414"/></svg>
<span class="t" style="left:32.30px;top:221px;font-size:12px;line-height:16px;color:#000;transform:scaleX(0.9170)"><i class="bs">\</i>com<i class="bs">\</i>vdoc<i class="bs">\</i>www<i class="bs">\</i>Users<i class="bs">\</i>Test123</span>
<span class="t" style="left:248.30px;top:221px;font-size:12px;line-height:16px;color:#000;transform:scaleX(0.8525)">User</span>
<span class="t" style="left:432.40px;top:221px;font-size:12px;line-height:16px;color:#000;transform:scaleX(0.8577)">VDOC<i class="bs">\</i>Administrator</span>
<span class="t" style="left:562.10px;top:221px;font-size:12px;line-height:16px;color:#000;transform:scaleX(0.9256)">2/14/2017 1:03:29 PM</span>
<span class="t" style="left:761.80px;top:221px;font-size:12px;line-height:16px;color:#4444d0;transform:scaleX(0.8667)">Properties Modified</span>
<div class="r" style="left:0;top:240px;width:28px;height:19px;background:#fff"></div>
<div class="r" style="left:29px;top:240px;width:860px;height:19px;background:#f4f8fc"></div>
<div class="r" style="left:0;top:259px;width:28px;height:1px;background:#d6d6d6"></div>
<div class="r" style="left:28px;top:259px;width:861px;height:1px;background:#bebebe"></div>
<svg class="r" style="left:230px;top:240px" width="17" height="17" viewBox="0 0 17 17"><path d="M1.2 14.6 Q1.5 10.6 6 9.6 L11 9.6 Q15.5 10.6 15.8 14.6 Q15 16 8.5 16.2 Q2 16 1.2 14.6 Z" fill="url(#ub)"/><path d="M1.4 14.9 Q3 16 8.5 16.1 Q14 16 15.6 14.9" fill="none" stroke="#9aaeb2" stroke-width="0.7"/><path d="M6.8 9.6 L8.5 12.2 L10.2 9.6 Z" fill="#fff"/><path d="M8 10.6 H9 L9.5 14.4 L8.5 15.4 L7.5 14.4 Z" fill="#5a5ac4"/><ellipse cx="8.5" cy="6.3" rx="3.1" ry="3.7" fill="url(#sk)"/><path d="M4.7 7 Q3.9 1 8.6 0.8 Q13.2 1 12.3 6.2 Q11.8 3.7 9.6 3.5 Q7.2 3.2 6.1 4.3 Q5.1 5.2 5 7.2 Z" fill="#141414"/></svg>
<span class="t" style="left:32.30px;top:241px;font-size:12px;line-height:16px;color:#000;transform:scaleX(0.9170)"><i class="bs">\</i>com<i class="bs">\</i>vdoc<i class="bs">\</i>www<i class="bs">\</i>Users<i class="bs">\</i>Test123</span>
<span class="t" style="left:248.30px;top:241px;font-size:12px;line-height:16px;color:#000;transform:scaleX(0.8525)">User</span>
<span class="t" style="left:432.40px;top:241px;font-size:12px;line-height:16px;color:#000;transform:scaleX(0.8577)">VDOC<i class="bs">\</i>Administrator</span>
<span class="t" style="left:562.10px;top:241px;font-size:12px;line-height:16px;color:#000;transform:scaleX(0.9256)">2/14/2017 1:03:29 PM</span>
<span class="t" style="left:761.80px;top:241px;font-size:12px;line-height:16px;color:#4444d0;transform:scaleX(0.8667)">Properties Modified</span>
<div class="r" style="left:0;top:260px;width:28px;height:19px;background:#fff"></div>
<div class="r" style="left:29px;top:260px;width:860px;height:19px;background:#ffffff"></div>
<div class="r" style="left:559px;top:260px;width:199px;height:19px;background:#f5f5f5"></div>
<div class="r" style="left:0;top:279px;width:28px;height:1px;background:#d6d6d6"></div>
<div class="r" style="left:28px;top:279px;width:861px;height:1px;background:#bebebe"></div>
<svg class="r" style="left:230px;top:260px" width="17" height="17" viewBox="0 0 17 17"><path d="M1.2 14.6 Q1.5 10.6 6 9.6 L11 9.6 Q15.5 10.6 15.8 14.6 Q15 16 8.5 16.2 Q2 16 1.2 14.6 Z" fill="url(#ub)"/><path d="M1.4 14.9 Q3 16 8.5 16.1 Q14 16 15.6 14.9" fill="none" stroke="#9aaeb2" stroke-width="0.7"/><path d="M6.8 9.6 L8.5 12.2 L10.2 9.6 Z" fill="#fff"/><path d="M8 10.6 H9 L9.5 14.4 L8.5 15.4 L7.5 14.4 Z" fill="#5a5ac4"/><ellipse cx="8.5" cy="6.3" rx="3.1" ry="3.7" fill="url(#sk)"/><path d="M4.7 7 Q3.9 1 8.6 0.8 Q13.2 1 12.3 6.2 Q11.8 3.7 9.6 3.5 Q7.2 3.2 6.1 4.3 Q5.1 5.2 5 7.2 Z" fill="#141414"/></svg>
<span class="t" style="left:32.30px;top:261px;font-size:12px;line-height:16px;color:#000;transform:scaleX(0.9170)"><i class="bs">\</i>com<i class="bs">\</i>vdoc<i class="bs">\</i>www<i class="bs">\</i>Users<i class="bs">\</i>Test123</span>
<span class="t" style="left:248.30px;top:261px;font-size:12px;line-height:16px;color:#000;transform:scaleX(0.8525)">User</span>
<span class="t" style="left:432.40px;top:261px;font-size:12px;line-height:16px;color:#000;transform:scaleX(0.8577)">VDOC<i class="bs">\</i>Administrator</span>
<span class="t" style="left:562.10px;top:261px;font-size:12px;line-height:16px;color:#000;transform:scaleX(0.9256)">2/14/2017 1:03:29 PM</span>
<span class="t" style="left:761.80px;top:261px;font-size:12px;line-height:16px;color:#0a8040;transform:scaleX(0.8573)">Created</span>
<div class="r" style="left:28px;top:0;width:1px;height:265px;background:#a4a4a4"></div>
<div class="r" style="left:228px;top:0;width:1px;height:265px;background:#bababa"></div>
<div class="r" style="left:428px;top:0;width:1px;height:265px;background:#bababa"></div>
<div class="r" style="left:558px;top:0;width:1px;height:265px;background:#bababa"></div>
<div class="r" style="left:758px;top:0;width:1px;height:265px;background:#bababa"></div>
<div class="r" style="left:889px;top:0;width:1px;height:265px;background:#bababa"></div>
</div>
<div class="r" style="left:31px;top:307px;width:1px;height:45px;background:#a4a4a4;"></div>
<div class="r" style="left:231px;top:307px;width:1px;height:45px;background:#c6c6c6;"></div>
<div class="r" style="left:431px;top:307px;width:1px;height:45px;background:#c6c6c6;"></div>
<div class="r" style="left:561px;top:307px;width:1px;height:45px;background:#c6c6c6;"></div>
<div class="r" style="left:761px;top:307px;width:1px;height:45px;background:#c6c6c6;"></div>
<div class="r" style="left:892px;top:307px;width:1px;height:45px;background:#c6c6c6;"></div>
<div class="r" style="left:893px;top:270px;width:15px;height:347px;background:#f0f0f0;"></div>
<div class="r" style="left:892px;top:270px;width:1px;height:364px;background:#a8a8a8;"></div>
<div class="r" style="left:908px;top:270px;width:1px;height:347px;background:#a8a8a8;"></div>
<div class="r" style="left:893px;top:287px;width:15px;height:1px;background:#a8a8a8;"></div>
<svg class="r" style="left:896px;top:276px" width="10" height="6" viewBox="0 0 10 6"><path d="M0 5.5 L5 0.3 L10 5.5 Z" fill="#7a7a7a"/></svg>
<div class="r" style="left:893px;top:581px;width:15px;height:1px;background:#a8a8a8;"></div>
<div class="r" style="left:893px;top:582px;width:15px;height:17px;background:#fff;"></div>
<div class="r" style="left:893px;top:599px;width:15px;height:1px;background:#a8a8a8;"></div>
<div class="r" style="left:893px;top:616px;width:15px;height:1px;background:#a8a8a8;"></div>
<svg class="r" style="left:896px;top:607px" width="10" height="6" viewBox="0 0 10 6"><path d="M0 0.3 L5 5.5 L10 0.3 Z" fill="#6e6e6e"/></svg>
<div class="r" style="left:910px;top:270px;width:3px;height:393px;background:#f0f0f0;"></div>
<div class="r" style="left:913px;top:270px;width:1px;height:393px;background:#f8f8f8;"></div>
<div class="r" style="left:3px;top:617px;width:889px;height:1px;background:#a0a0a0;"></div>
<div class="r" style="left:3px;top:618px;width:889px;height:15px;background:#fff;"></div>
<div class="r" style="left:3px;top:618px;width:497px;height:15px;background:#f0f0f0;"></div>
<div class="r" style="left:19px;top:618px;width:1px;height:15px;background:#a8a8a8;"></div>
<div class="r" style="left:20px;top:618px;width:1px;height:15px;background:#dcdcdc;"></div>
<div class="r" style="left:500px;top:618px;width:1px;height:15px;background:#a0a0a0;"></div>
<div class="r" style="left:875px;top:618px;width:17px;height:15px;background:#f0f0f0;"></div>
<div class="r" style="left:874px;top:618px;width:1px;height:15px;background:#d0d0d0;"></div>
<div class="r" style="left:875px;top:618px;width:1px;height:15px;background:#a8a8a8;"></div>
<div class="r" style="left:3px;top:633px;width:890px;height:1px;background:#a4a4a4;"></div>
<svg class="r" style="left:8px;top:621px" width="6" height="10" viewBox="0 0 6 10"><path d="M5.4 0 L0.2 4.6 L5.4 9.2 Z" fill="#626262"/></svg>
<svg class="r" style="left:881px;top:621px" width="6" height="10" viewBox="0 0 6 10"><path d="M0.2 0 L5.4 4.6 L0.2 9.2 Z" fill="#626262"/></svg>
<svg width="0" height="0" style="position:absolute"><defs><linearGradient id="pg" x1="0" y1="0" x2="1" y2="1"><stop offset="0" stop-color="#e0e0e0"/><stop offset="1" stop-color="#a8a8a8"/></linearGradient></defs></svg>
<div class="r" style="left:7px;top:637px;width:24px;height:24px;border:1px solid #3498db;background:#fff"></div>
<svg class="r" style="left:7px;top:637px" width="26" height="26" viewBox="0 0 26 26"><rect x="8" y="7" width="3" height="11.5" fill="url(#pg)"/><path d="M18 7 L12 12.7 L18 18.4 Z" fill="url(#pg)"/><rect x="19" y="10" width="1" height="1" fill="#8cc4f4"/><rect x="19" y="16" width="1" height="1" fill="#8cc4f4"/><rect x="21" y="16" width="1" height="1" fill="#b070b0"/></svg>
<div class="r" style="left:34px;top:637px;width:24px;height:24px;border:1px solid #3498db;background:#fff"></div>
<svg class="r" style="left:34px;top:637px" width="26" height="26" viewBox="0 0 26 26"><path d="M18 7 L12 12.7 L18 18.4 Z" fill="url(#pg)"/><rect x="22" y="16" width="1" height="1" fill="#b070b0"/></svg>
<div class="r" style="left:233px;top:637px;width:24px;height:24px;border:1px solid #3498db;background:#fff"></div>
<svg class="r" style="left:233px;top:637px" width="26" height="26" viewBox="0 0 26 26"><path d="M11 7 L17 12.4 L11 17.8 Z" fill="url(#pg)"/><rect x="19" y="13" width="1" height="1" fill="#8cc4f4"/><rect x="21" y="16" width="1" height="1" fill="#b070b0"/></svg>
<div class="r" style="left:260px;top:637px;width:24px;height:24px;border:1px solid #3498db;background:#fff"></div>
<svg class="r" style="left:260px;top:637px" width="26" height="26" viewBox="0 0 26 26"><path d="M8 7 L14 12.4 L8 17.8 Z" fill="url(#pg)"/><rect x="15" y="7" width="3" height="11.5" fill="url(#pg)"/><rect x="19" y="13" width="1" height="1" fill="#8cc4f4"/><rect x="21" y="16" width="1" height="1" fill="#b070b0"/></svg>
<div class="r" style="left:62px;top:637px;width:59px;height:23px;background:#fff;border-top:1px solid #6e6e6e;border-left:1px solid #6e6e6e;border-right:1px solid #dcdcdc;border-bottom:1px solid #dcdcdc;box-shadow:inset 1px 1px 0 #a8a8a8"></div>
<span class="t" style="left:68.60px;top:639px;font-size:12px;line-height:16px;color:#000;transform:scaleX(0.9170)">1</span>
<span class="t" style="left:130.40px;top:641px;font-size:12px;line-height:16px;color:#240c0c;transform:scaleX(0.8776)">of 1 page(s)</span>
<span class="t" style="left:298.90px;top:644px;font-size:12px;line-height:16px;color:#2a1212;font-weight:bold;transform:scaleX(0.8726);">Total Records : 14</span>
<span class="t" style="left:920.40px;top:272px;font-size:12px;line-height:16px;color:#2a1414;font-weight:bold;transform:scaleX(0.8792);">Details</span>
<svg class="r" style="left:1160px;top:276px" width="18" height="18" viewBox="0 0 18 18"><rect x="1.5" y="1.5" width="15" height="15" rx="1.6" fill="#fff" stroke="#606060" stroke-width="1"/><rect x="3.1" y="9.1" width="11.8" height="4.7" fill="#000"/></svg>
<svg class="r" style="left:1185px;top:276px" width="18" height="18" viewBox="0 0 18 18"><path d="M10.9 10.9 L16.1 16.1" stroke="#000" stroke-width="2.2" stroke-linecap="round"/><path d="M7.05 0.8 L8.9 2.1 L8.9 5.5 L12.7 6 L14.06 7.6 L12.5 9.6 L10.7 10.9 L8.4 13.9 L6.15 13 L5.9 9.6 L2.3 8.7 L0.95 7.1 L2.5 5.3 Z" fill="#626262" stroke="#626262" stroke-width="0.8" stroke-linejoin="round"/></svg>
<div class="r" style="left:914px;top:307px;width:61px;height:18px;background:#3498db;"></div>
<span class="t" style="left:929.40px;top:308px;font-size:12px;line-height:16px;color:#fff;font-weight:bold;transform:scaleX(0.9181);">Detail</span>
<div class="r" style="left:914px;top:324px;width:293px;height:338px;border:1px solid #9c9c9c;border-top-color:#a4a4a4;background:#fff"></div>
<div class="r" style="left:920px;top:329px;width:281px;height:327px;border:1px solid #d6d6d6;background:#fff"></div>
<span class="t" style="left:942.60px;top:352px;font-size:12px;line-height:16px;color:#0a0a80;">•</span>
<span class="t" style="left:950.40px;top:352px;font-size:12px;line-height:16px;color:#0a0a80;transform:scaleX(0.9737);">Object Path:</span>
<span class="t" style="left:1021.00px;top:352px;font-size:12px;line-height:16px;color:#1c1010;transform:scaleX(1.0350);">\com\vdoc\www\Users\Test789</span>
<span class="t" style="left:942.60px;top:372px;font-size:12px;line-height:16px;color:#0a0a80;">•</span>
<span class="t" style="left:950.40px;top:372px;font-size:12px;line-height:16px;color:#0a0a80;transform:scaleX(0.9460);">Object Class:</span>
<span class="t" style="left:1024.60px;top:372px;font-size:12px;line-height:16px;color:#1c1010;transform:scaleX(0.8881);">User</span>
<span class="t" style="left:942.60px;top:392px;font-size:12px;line-height:16px;color:#0a0a80;">•</span>
<span class="t" style="left:950.40px;top:392px;font-size:12px;line-height:16px;color:#0a0a80;transform:scaleX(1.0170);">Who Modified:</span>
<span class="t" style="left:1035.50px;top:392px;font-size:12px;line-height:16px;color:#1c1010;transform:scaleX(1.0028);">VDOC\Administrator</span>
<span class="t" style="left:942.60px;top:412px;font-size:12px;line-height:16px;color:#0a0a80;">•</span>
<span class="t" style="left:950.40px;top:412px;font-size:12px;line-height:16px;color:#0a0a80;transform:scaleX(0.9515);">When:</span>
<span class="t" style="left:990.00px;top:412px;font-size:12px;line-height:16px;color:#1c1010;transform:scaleX(0.9484);">2/14/2017 1:04:39 PM</span>
<span class="t" style="left:942.60px;top:432px;font-size:12px;line-height:16px;color:#0a0a80;">•</span>
<span class="t" style="left:950.40px;top:432px;font-size:12px;line-height:16px;color:#0a0a80;transform:scaleX(0.9905);">Operation:</span>
<span class="t" style="left:1012.00px;top:432px;font-size:12px;line-height:16px;color:#1c1010;transform:scaleX(0.9599);">Properties</span>
<span class="t" style="left:1068.30px;top:432px;font-size:12px;line-height:16px;color:#5252d2;transform:scaleX(1.0472);">Modified</span>
<span class="t" style="left:942.60px;top:452px;font-size:12px;line-height:16px;color:#0a0a80;">•</span>
<span class="t" style="left:950.40px;top:452px;font-size:12px;line-height:16px;color:#0a0a80;transform:scaleX(0.9308);">Where:</span>
<span class="t" style="left:993.30px;top:452px;font-size:12px;line-height:16px;color:#1c1010;transform:scaleX(0.9619);">SP13-EX10.www.vdoc.com</span>
<span class="t" style="left:942.60px;top:472px;font-size:12px;line-height:16px;color:#0a0a80;">•</span>
<span class="t" style="left:950.40px;top:472px;font-size:12px;line-height:16px;color:#0a0a80;transform:scaleX(0.9735);">From:</span>
<span class="t" style="left:942.60px;top:492px;font-size:12px;line-height:16px;color:#0a0a80;">•</span>
<span class="t" style="left:950.40px;top:492px;font-size:12px;line-height:16px;color:#0a0a80;transform:scaleX(0.9731);">What:</span>
<span class="t" style="left:982.00px;top:512px;font-size:12px;line-height:16px;color:#1c1010;transform:scaleX(0.9599);">Properties</span>
<span class="t" style="left:1038.30px;top:512px;font-size:12px;line-height:16px;color:#5252d2;transform:scaleX(1.0472);">Modified</span>
<span class="t" style="left:1088.30px;top:512px;font-size:12px;line-height:16px;color:#1c1010;">:</span>
<span class="t" style="left:922.30px;top:532px;font-size:12px;line-height:16px;color:#8a8a20;transform:scaleX(0.9784);">[Pwd-Last-Set]</span>
<span class="t" style="left:1003.30px;top:532px;font-size:12px;line-height:16px;color:#5252d2;transform:scaleX(1.0472);">Modified</span>
<span class="t" style="left:1053.30px;top:532px;font-size:12px;line-height:16px;color:#1c1010;">:</span>
<span class="t" style="left:1002.50px;top:552px;font-size:12px;line-height:16px;color:#1a1ad0;transform:scaleX(0.9416);">From:</span>
<span class="t" style="left:1036.30px;top:552px;font-size:12px;line-height:16px;color:#1c1010;transform:scaleX(0.9309);">02/14/2017 13:04:30</span>
<span class="t" style="left:1002.50px;top:572px;font-size:12px;line-height:16px;color:#1a1ad0;transform:scaleX(0.9995);">To:</span>
<span class="t" style="left:1022.50px;top:572px;font-size:12px;line-height:16px;color:#1c1010;transform:scaleX(0.9802);">(none)</span>
<div class="r" style="left:921px;top:640px;width:281px;height:17px;background:#ececec;"></div>
<div class="r" style="left:921px;top:640px;width:15px;height:15px;background:#fff;border:1px solid #d6d6d6"></div>
<div class="r" style="left:938px;top:640px;width:6px;height:15px;background:#fff;border:1px solid #d6d6d6"></div>
<div class="r" style="left:1185px;top:640px;width:15px;height:15px;background:#fff;border:1px solid #d6d6d6"></div>
<svg class="r" style="left:927px;top:644px" width="6" height="10" viewBox="0 0 6 10"><path d="M5.4 0 L0.2 4.6 L5.4 9.2 Z" fill="#6a6a6a"/></svg>
<svg class="r" style="left:1191px;top:644px" width="6" height="10" viewBox="0 0 6 10"><path d="M0.2 0 L5.4 4.6 L0.2 9.2 Z" fill="#6a6a6a"/></svg>
</body></html>
